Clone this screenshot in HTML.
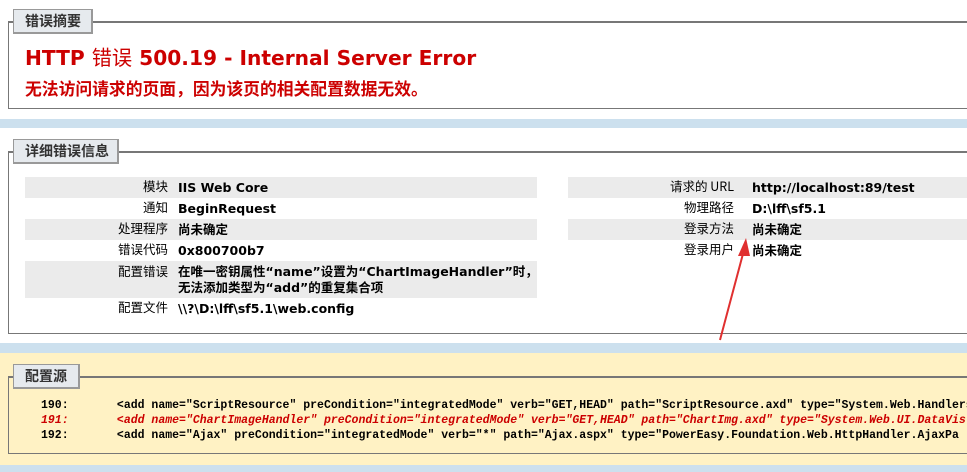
<!DOCTYPE html>
<html><head><meta charset="utf-8"><style>
*{margin:0;padding:0;box-sizing:border-box}
body{width:967px;height:472px;overflow:hidden;background:#fff;position:relative;font-family:"DejaVu Sans","Noto Sans CJK SC",sans-serif;font-size:12px;color:#000}
.abs{position:absolute}
.box{position:absolute;border:1px solid #777;border-right:none;border-top:2px solid #777}
.leg{position:absolute;background:#e6eaee;border:1px solid #999;border-right:2px solid #999;border-bottom:2px solid #999;font-weight:bold;font-size:14px;line-height:22px;color:#333;padding:0 0 0 11px;font-family:"Noto Sans CJK SC",sans-serif}
.band{position:absolute;left:0;width:967px;background:#cce0ee}
.row{position:absolute;height:21px}
.g{background:#ebebeb}
.lab{position:absolute;text-align:right;font-family:"Noto Sans CJK SC",sans-serif;font-size:12.5px;line-height:21px;height:21px;margin-top:-2px}
.val{position:absolute;font-weight:bold;font-family:"DejaVu Sans","Noto Sans CJK SC",sans-serif;font-size:12.5px;line-height:21px;height:21px}
.code{position:absolute;font-family:"Liberation Mono","Noto Sans CJK SC",monospace;font-weight:bold;font-size:11.5px;white-space:pre;line-height:15px}
</style></head><body>
<div class="box" style="left:8px;top:21px;width:960px;height:88px"></div>
<div class="leg" style="left:13px;top:9px;width:80px;height:25px">错误摘要</div>
<div class="abs" style="left:25px;top:42px;color:#c00;font-weight:bold;font-size:20.2px;font-family:'DejaVu Sans','Noto Sans CJK SC',sans-serif">HTTP <span style="font-weight:normal">错误</span> 500.19 - Internal Server Error</div>
<div class="abs" style="left:25px;top:76px;color:#c00;font-size:16.8px;font-family:'Noto Sans CJK SC',sans-serif;font-weight:bold">无法访问请求的页面，因为该页的相关配置数据无效。</div>
<div class="band" style="top:119px;height:9px"></div>

<div class="box" style="left:8px;top:151px;width:960px;height:183px"></div>
<div class="leg" style="left:13px;top:139px;width:106px;height:25px">详细错误信息</div>

<div class="row g" style="left:25px;top:177px;width:512px"></div>
<div class="row g" style="left:25px;top:219px;width:512px"></div>
<div class="row g" style="left:25px;top:261px;width:512px;height:37px"></div>
<div class="lab" style="right:799px;top:177px">模块</div><div class="val" style="left:178px;top:177px">IIS Web Core</div>
<div class="lab" style="right:799px;top:198px">通知</div><div class="val" style="left:178px;top:198px">BeginRequest</div>
<div class="lab" style="right:799px;top:219px">处理程序</div><div class="val" style="left:178px;top:219px">尚未确定</div>
<div class="lab" style="right:799px;top:240px">错误代码</div><div class="val" style="left:178px;top:240px">0x800700b7</div>
<div class="lab" style="right:799px;top:262px">配置错误</div><div class="val" style="left:178px;top:264px;line-height:16px;height:auto">在唯一密钥属性“name”设置为“ChartImageHandler”时，<br>无法添加类型为“add”的重复集合项</div>
<div class="lab" style="right:799px;top:298px">配置文件</div><div class="val" style="left:178px;top:298px">\\?\D:\lff\sf5.1\web.config</div>

<div class="row g" style="left:568px;top:177px;width:399px"></div>
<div class="row g" style="left:568px;top:219px;width:399px"></div>
<div class="lab" style="right:233px;top:177px">请求的 URL</div><div class="val" style="left:752px;top:177px">http://localhost:89/test</div>
<div class="lab" style="right:233px;top:198px">物理路径</div><div class="val" style="left:752px;top:198px">D:\lff\sf5.1</div>
<div class="lab" style="right:233px;top:219px">登录方法</div><div class="val" style="left:752px;top:219px">尚未确定</div>
<div class="lab" style="right:233px;top:240px">登录用户</div><div class="val" style="left:752px;top:240px">尚未确定</div>

<div class="band" style="top:343px;height:10px"></div>
<div class="abs" style="left:0;top:353px;width:967px;height:112px;background:#fff2c4"></div>
<div class="band" style="top:465px;height:7px"></div>
<div class="box" style="left:8px;top:376px;width:960px;height:78px"></div>
<div class="leg" style="left:13px;top:364px;width:67px;height:25px">配置源</div>
<div class="code" style="left:41px;top:398px">190:       &lt;add name="ScriptResource" preCondition="integratedMode" verb="GET,HEAD" path="ScriptResource.axd" type="System.Web.Handlers
<span style="color:#c00;font-style:italic">191:       &lt;add name="ChartImageHandler" preCondition="integratedMode" verb="GET,HEAD" path="ChartImg.axd" type="System.Web.UI.DataVis</span>
192:       &lt;add name="Ajax" preCondition="integratedMode" verb="*" path="Ajax.aspx" type="PowerEasy.Foundation.Web.HttpHandler.AjaxPa</div>

<svg class="abs" style="left:0;top:0" width="967" height="472">
<line x1="720" y1="340" x2="744" y2="250" stroke="#e03030" stroke-width="2"/>
<polygon points="746,238 738,256 750,256" fill="#e03030"/>
</svg>
</body></html>
